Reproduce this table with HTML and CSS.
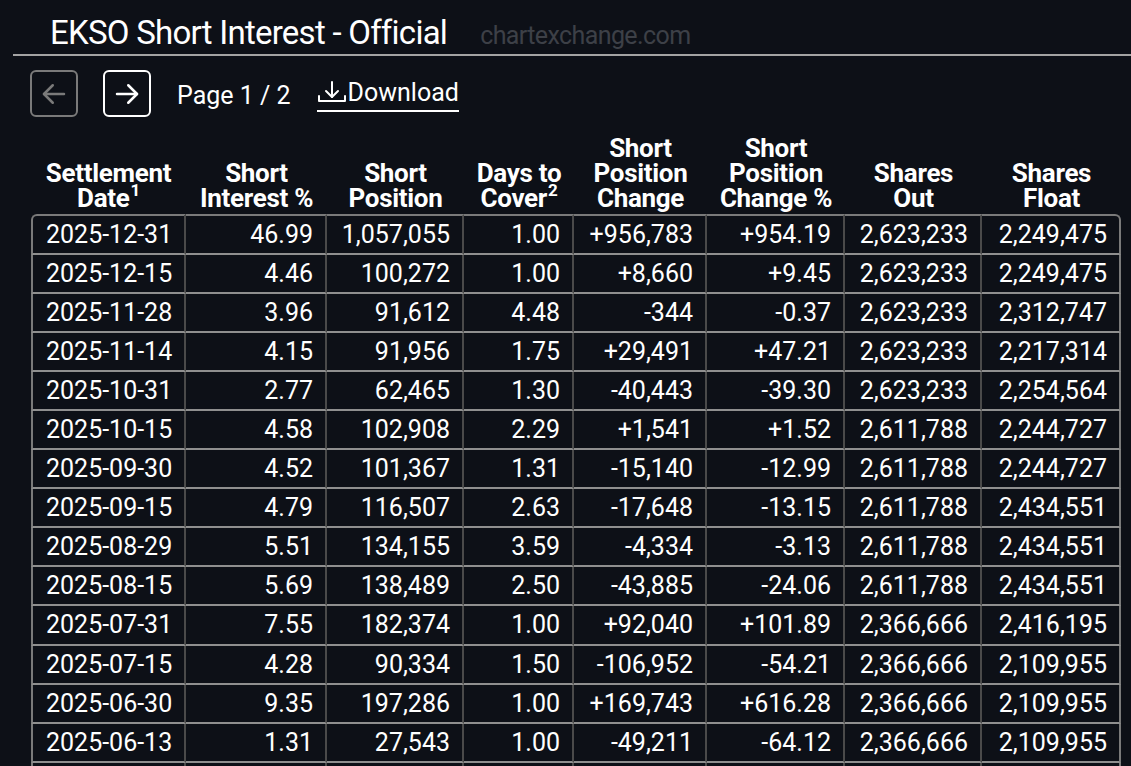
FILE: index.html
```html
<!DOCTYPE html>
<html lang="en">
<head>
<meta charset="utf-8">
<title>EKSO Short Interest - Official</title>
<link rel="stylesheet" href="styles.css">
</head>
<body>
<div class="page">
  <div class="titlebar">
    <h1 class="title">EKSO Short Interest - Official</h1>
    <span class="brand">chartexchange.com</span>
  </div>
  <div class="toolbar">
    <button class="navbtn disabled" aria-label="Previous page">
      <svg width="30" height="30" viewBox="0 0 24 24" fill="none" stroke="currentColor" stroke-width="2" stroke-linecap="round" stroke-linejoin="round"><path d="M20 12H4"/><path d="M11 5l-7 7 7 7"/></svg>
    </button>
    <button class="navbtn" aria-label="Next page">
      <svg width="30" height="30" viewBox="0 0 24 24" fill="none" stroke="currentColor" stroke-width="2" stroke-linecap="round" stroke-linejoin="round"><path d="M4 12h16"/><path d="M13 5l7 7-7 7"/></svg>
    </button>
    <span class="pageinfo">Page 1 / 2</span>
    <a class="download" href="#">
      <svg class="dlicon" width="30" height="26" viewBox="0 0 30 26" fill="none" stroke="currentColor" stroke-width="2" stroke-linecap="round" stroke-linejoin="round"><path d="M15 3v15"/><path d="M9 12l6 6 6-6"/><path d="M2 17v5h26v-5"/></svg><span>Download</span>
    </a>
  </div>
  <table class="grid">
    <colgroup>
      <col class="c1"><col class="c2"><col class="c3"><col class="c4"><col class="c5"><col class="c6"><col class="c7"><col class="c8">
    </colgroup>
    <thead>
      <tr>
        <th>Settlement<br>Date<sup>1</sup></th>
        <th>Short<br>Interest %</th>
        <th>Short<br>Position</th>
        <th>Days to<br>Cover<sup>2</sup></th>
        <th>Short<br>Position<br>Change</th>
        <th>Short<br>Position<br>Change %</th>
        <th>Shares<br>Out</th>
        <th>Shares<br>Float</th>
      </tr>
    </thead>
    <tbody>
      <tr><td>2025-12-31</td><td>46.99</td><td>1,057,055</td><td>1.00</td><td>+956,783</td><td>+954.19</td><td>2,623,233</td><td>2,249,475</td></tr>
      <tr><td>2025-12-15</td><td>4.46</td><td>100,272</td><td>1.00</td><td>+8,660</td><td>+9.45</td><td>2,623,233</td><td>2,249,475</td></tr>
      <tr><td>2025-11-28</td><td>3.96</td><td>91,612</td><td>4.48</td><td>-344</td><td>-0.37</td><td>2,623,233</td><td>2,312,747</td></tr>
      <tr><td>2025-11-14</td><td>4.15</td><td>91,956</td><td>1.75</td><td>+29,491</td><td>+47.21</td><td>2,623,233</td><td>2,217,314</td></tr>
      <tr><td>2025-10-31</td><td>2.77</td><td>62,465</td><td>1.30</td><td>-40,443</td><td>-39.30</td><td>2,623,233</td><td>2,254,564</td></tr>
      <tr><td>2025-10-15</td><td>4.58</td><td>102,908</td><td>2.29</td><td>+1,541</td><td>+1.52</td><td>2,611,788</td><td>2,244,727</td></tr>
      <tr><td>2025-09-30</td><td>4.52</td><td>101,367</td><td>1.31</td><td>-15,140</td><td>-12.99</td><td>2,611,788</td><td>2,244,727</td></tr>
      <tr><td>2025-09-15</td><td>4.79</td><td>116,507</td><td>2.63</td><td>-17,648</td><td>-13.15</td><td>2,611,788</td><td>2,434,551</td></tr>
      <tr><td>2025-08-29</td><td>5.51</td><td>134,155</td><td>3.59</td><td>-4,334</td><td>-3.13</td><td>2,611,788</td><td>2,434,551</td></tr>
      <tr><td>2025-08-15</td><td>5.69</td><td>138,489</td><td>2.50</td><td>-43,885</td><td>-24.06</td><td>2,611,788</td><td>2,434,551</td></tr>
      <tr><td>2025-07-31</td><td>7.55</td><td>182,374</td><td>1.00</td><td>+92,040</td><td>+101.89</td><td>2,366,666</td><td>2,416,195</td></tr>
      <tr><td>2025-07-15</td><td>4.28</td><td>90,334</td><td>1.50</td><td>-106,952</td><td>-54.21</td><td>2,366,666</td><td>2,109,955</td></tr>
      <tr><td>2025-06-30</td><td>9.35</td><td>197,286</td><td>1.00</td><td>+169,743</td><td>+616.28</td><td>2,366,666</td><td>2,109,955</td></tr>
      <tr><td>2025-06-13</td><td>1.31</td><td>27,543</td><td>1.00</td><td>-49,211</td><td>-64.12</td><td>2,366,666</td><td>2,109,955</td></tr>
      <tr><td>2025-05-30</td><td>5.70</td><td>76,754</td><td>1.00</td><td>-12,305</td><td>-13.82</td><td>1,346,666</td><td>1,109,955</td></tr>
    </tbody>
  </table>
</div>
</body>
</html>
```

FILE: styles.css
```css
* { box-sizing: border-box; }
html, body {
  margin: 0;
  background: #0d1017;
  color: #ffffff;
  font-family: Roboto, "Liberation Sans", sans-serif;
  overflow: hidden;
}
.page {
  padding-top: 14px;
}
.titlebar {
  display: flex;
  align-items: baseline;
  gap: 33px;
  margin-left: 13px;
  padding-left: 37px;
  padding-bottom: 2px;
  border-bottom: 2px solid #a3a3a3;
}
.title {
  margin: 0;
  font-size: 33px;
  font-weight: 400;
  line-height: 38px;
  letter-spacing: -0.75px;
  color: #ffffff;
}
.brand {
  font-size: 25px;
  letter-spacing: -0.6px;
  color: #3d4047;
}
.toolbar {
  display: flex;
  align-items: center;
  margin-top: 14px;
  margin-left: 30px;
  height: 47px;
}
.navbtn {
  width: 48px;
  height: 47px;
  border: 2px solid #ffffff;
  border-radius: 6px;
  background: transparent;
  color: #ffffff;
  padding: 0;
  display: flex;
  align-items: center;
  justify-content: center;
  margin-right: 25px;
}
.navbtn.disabled {
  border-color: #7a7a7a;
  color: #7a7a7a;
}
.pageinfo {
  font-size: 25px;
  margin-left: 1px;
  margin-right: 25px;
  padding-top: 4px;
}
.download {
  display: flex;
  align-items: flex-end;
  color: #ffffff;
  text-decoration: none;
  font-size: 25px;
  border-bottom: 2px solid #ffffff;
  padding-bottom: 3px;
  margin-top: 2px;
  margin-left: 1px;
}
.dlicon { margin-right: 1px; margin-bottom: 2px; }
.grid {
  margin-top: 19px;
  margin-left: 31px;
  border-collapse: separate;
  border-spacing: 0;
  table-layout: fixed;
  width: 1090px;
}
.c1 { width: 155px; }
.c2 { width: 141px; }
.c3 { width: 137px; }
.c4 { width: 110px; }
.c5 { width: 133px; }
.c6 { width: 138px; }
.c7 { width: 137px; }
.c8 { width: 139px; }
.grid th {
  font-size: 26px;
  font-weight: 700;
  line-height: 25px;
  letter-spacing: -0.3px;
  text-align: center;
  vertical-align: bottom;
  padding: 0 2px 3px;
  white-space: nowrap;
}
.grid th sup {
  font-size: 17px;
  line-height: 0;
  vertical-align: 11px;
  margin-left: 1px;
}
.grid td {
  font-size: 25px;
  font-weight: 400;
  line-height: 37.05px;
  padding: 0 12px 0 8px;
  text-align: right;
  border-right: 2px solid #4a4a4a;
  border-bottom: 2px solid #8f8f8f;
  white-space: nowrap;
}
.grid td:first-child {
  text-align: left;
  padding-left: 13px;
  border-left: 2px solid #7a7a7a;
}
.grid td:last-child { border-right-color: #7a7a7a; }
.grid tbody tr:first-child td { border-top: 2px solid #7a7a7a; }
.grid tbody tr:first-child td:first-child { border-top-left-radius: 6px; }
.grid tbody tr:first-child td:last-child { border-top-right-radius: 6px; }
```
